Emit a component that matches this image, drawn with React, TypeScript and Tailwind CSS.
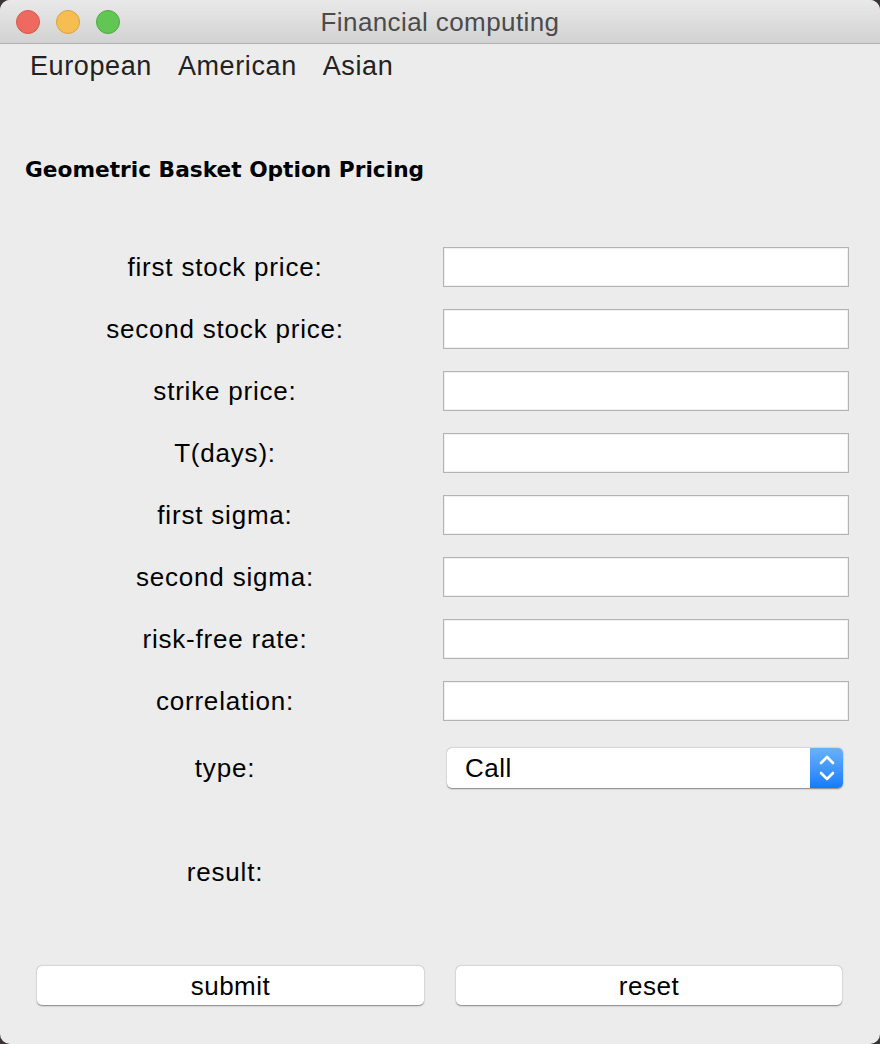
import React from "react";

const labels = [
  "first stock price:",
  "second stock price:",
  "strike price:",
  "T(days):",
  "first sigma:",
  "second sigma:",
  "risk-free rate:",
  "correlation:",
];

const helv = { fontFamily: '"Liberation Sans", Arial, sans-serif' };

export default function App() {
  return (
    <div className="w-[880px] h-[1044px] bg-[#3a3434]">
      <div className="w-[880px] h-[1044px] bg-[#ececec] rounded-[10px] overflow-hidden flex flex-col" style={helv}>
        {/* Title bar */}
        <div className="h-[44px] shrink-0 relative flex items-center justify-center bg-gradient-to-b from-[#e9e9e9] to-[#d2d2d2] border-b border-[#b2b2b2]">
          <div className="absolute left-[16px] top-[10px] flex gap-[16px]">
            <div className="w-[24px] h-[24px] rounded-full bg-[#ee6a5f] border border-[#d6584c]" />
            <div className="w-[24px] h-[24px] rounded-full bg-[#f6be50] border border-[#d9a141]" />
            <div className="w-[24px] h-[24px] rounded-full bg-[#62c655] border border-[#51a940]" />
          </div>
          <span className="text-[26px] text-[#4b4b4b] tracking-[0.4px] mt-[1px]">Financial computing</span>
        </div>

        {/* Menu */}
        <div className="flex gap-[26px] pl-[30px] pt-[6px] text-[27px] text-[#222] tracking-[0.6px] leading-[32px]">
          <span>European</span>
          <span>American</span>
          <span>Asian</span>
        </div>

        {/* Heading */}
        <div
          className="pl-[25px] mt-[74px] text-[21.7px] font-bold text-black leading-[28px]"
          style={{ fontFamily: '"DejaVu Sans", Verdana, sans-serif' }}
        >
          Geometric Basket Option Pricing
        </div>

        {/* Form rows */}
        <div className="mt-[63px] flex flex-col gap-[22px]">
          {labels.map((l) => (
            <div key={l} className="flex items-center h-[40px]">
              <div className="w-[443px] pl-[7px] text-center text-[26px] tracking-[0.8px] text-black">{l}</div>
              <div className="w-[406px] h-[40px] bg-white border border-[#b3b3b3] shadow-[inset_0_0_0_1px_#f0f0f0]" />
            </div>
          ))}
          <div className="flex items-center h-[40px] mt-[5px]">
            <div className="w-[443px] pl-[7px] text-center text-[26px] tracking-[0.8px] text-black">type:</div>
            <div className="ml-[4px] w-[396px] h-[40px] bg-white rounded-[5px] shadow-[0_0.5px_1.5px_rgba(0,0,0,0.45)] flex overflow-hidden">
              <div className="flex-1 flex items-center pl-[18px] text-[26px] tracking-[0.5px] text-black">Call</div>
              <div className="w-[33px] h-full bg-gradient-to-b from-[#69b1fa] to-[#0f7cfc] flex items-center justify-center">
                <svg width="18" height="32" viewBox="0 0 18 32" fill="none" stroke="white" strokeWidth="2.6" strokeLinecap="round" strokeLinejoin="round">
                  <path d="M3 11 L9 5 L15 11" />
                  <path d="M3 21 L9 27 L15 21" />
                </svg>
              </div>
            </div>
          </div>
        </div>

        {/* Result */}
        <div className="mt-[64px] flex items-center h-[40px]">
          <div className="w-[443px] pl-[7px] text-center text-[26px] tracking-[0.8px] text-black">result:</div>
        </div>

        {/* Buttons */}
        <div className="mt-[74px] flex pl-[37px] gap-[32px]">
          <button className="w-[387px] h-[39px] bg-white rounded-[5px] shadow-[0_0.5px_1.5px_rgba(0,0,0,0.45)] text-[26px] tracking-[0.5px] text-black leading-none">
            submit
          </button>
          <button className="w-[386px] h-[39px] bg-white rounded-[5px] shadow-[0_0.5px_1.5px_rgba(0,0,0,0.45)] text-[26px] tracking-[0.5px] text-black leading-none">
            reset
          </button>
        </div>
      </div>
    </div>
  );
}
